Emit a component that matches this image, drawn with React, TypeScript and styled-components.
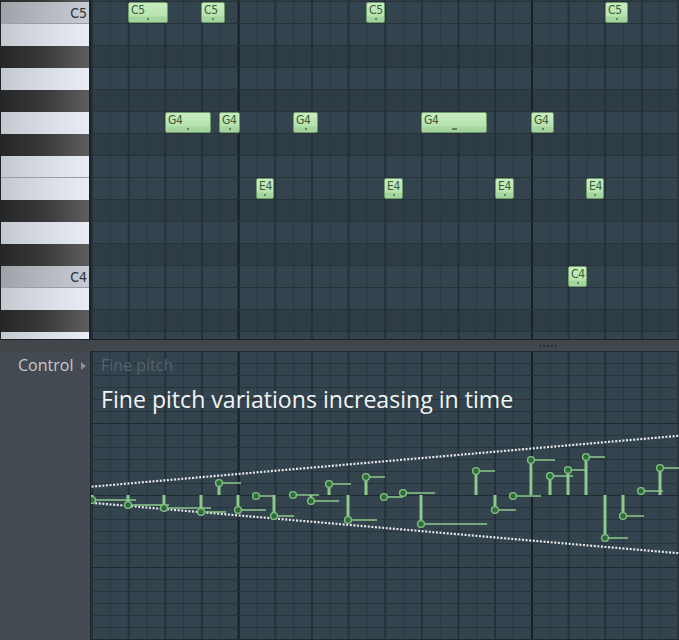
import React from "react";
import styled, { createGlobalStyle, css } from "styled-components";

const GlobalStyle = createGlobalStyle`
  html, body {
    margin: 0;
    padding: 0;
    background: #434a51;
  }
  body {
    font-family: "Open Sans", "Liberation Sans", sans-serif;
    overflow: hidden;
  }
`;

const ROW = 22;
const CENTER = 495;

type KeyKind = "white" | "black" | "c";

interface PianoKey {
  name: string;
  kind: KeyKind;
  edge?: boolean;
  h?: number;
}

const keys: PianoKey[] = [
  { name: "C#5", kind: "black", h: 2 },
  { name: "C5", kind: "c", edge: true },
  { name: "B4", kind: "white" },
  { name: "A#4", kind: "black" },
  { name: "A4", kind: "white" },
  { name: "G#4", kind: "black" },
  { name: "G4", kind: "white" },
  { name: "F#4", kind: "black" },
  { name: "F4", kind: "white", edge: true },
  { name: "E4", kind: "white" },
  { name: "D#4", kind: "black" },
  { name: "D4", kind: "white" },
  { name: "C#4", kind: "black" },
  { name: "C4", kind: "c", edge: true },
  { name: "B3", kind: "white" },
  { name: "A#3", kind: "black" },
  { name: "A3", kind: "white" },
];

// label, row index in keys[], page x start, page x end
const notes: [string, number, number, number][] = [
  ["C5", 1, 128, 168],
  ["C5", 1, 201, 225],
  ["C5", 1, 366, 385],
  ["C5", 1, 605, 628],
  ["G4", 6, 165, 211],
  ["G4", 6, 219, 240],
  ["G4", 6, 293, 318],
  ["G4", 6, 421, 487],
  ["G4", 6, 531, 554],
  ["E4", 9, 256, 274],
  ["E4", 9, 384, 403],
  ["E4", 9, 495, 514],
  ["E4", 9, 586, 604],
  ["C4", 13, 568, 587],
];

// x, value y, end x
const events: [number, number, number][] = [
  [92, 500, 136],
  [128, 505, 169],
  [164, 508, 211],
  [201, 512, 226],
  [219, 483, 241],
  [238, 510, 266],
  [256, 496, 274],
  [274, 516, 294],
  [293, 495, 319],
  [311, 501, 339],
  [329, 484, 351],
  [348, 520, 377],
  [366, 477, 385],
  [384, 497, 403],
  [403, 493, 435],
  [421, 524, 487],
  [476, 471, 495],
  [495, 510, 516],
  [513, 496, 541],
  [531, 460, 555],
  [550, 476, 573],
  [568, 470, 586],
  [586, 457, 605],
  [605, 538, 628],
  [623, 516, 644],
  [641, 491, 663],
  [660, 468, 684],
];

const GRID_LEFT = 91;

const stepLines = `
  linear-gradient(90deg, transparent 147px, #16212a 147px 148.3px, transparent 148.3px),
  linear-gradient(90deg, transparent 0.3px, #24303a 0.3px 1.5px, transparent 1.5px),
  linear-gradient(90deg, transparent 18.6px, #2a3741 18.6px 19.7px, transparent 19.7px)
`;
const stepSizes = `293.333px 100%, 36.667px 100%, 36.667px 100%`;

const verticalLines = css`
  background-image: ${stepLines};
  background-size: ${stepSizes};
`;

const Page = styled.div`
  width: 679px;
  height: 640px;
  display: flex;
  flex-direction: column;
  overflow: hidden;
`;

const Roll = styled.div`
  height: 339px;
  display: flex;
  overflow: hidden;
`;

const Keyboard = styled.div`
  width: 88px;
  border-left: 1px solid #1d2428;
  display: flex;
  flex-direction: column;
  flex-shrink: 0;
`;

const keyBg: Record<KeyKind, string> = {
  white: "linear-gradient(90deg, #c3c7ce 0%, #d6dae2 45%, #e8ecf4 100%)",
  black: "linear-gradient(90deg, #262626 0%, #3a3a3a 50%, #5e5e5e 100%)",
  c: "linear-gradient(90deg, #9da2a9 0%, #b2b6bd 45%, #c7cbd3 100%)",
};

const Key = styled.div<{ $kind: KeyKind; $edge?: boolean; $h: number }>`
  height: ${(p) => p.$h}px;
  flex-shrink: 0;
  box-sizing: border-box;
  background: ${(p) => keyBg[p.$kind]};
  border-bottom: ${(p) => (p.$edge ? "1px solid #9a9ea6" : "none")};
  display: flex;
  align-items: center;
  justify-content: flex-end;
  padding-right: 2px;
  font-family: "DejaVu Sans Condensed", "Liberation Sans Narrow", "DejaVu Sans", sans-serif;
  font-stretch: condensed;
  font-size: 14px;
  color: #2d333a;
`;

const KeySep = styled.div`
  width: 2px;
  flex-shrink: 0;
  background: #1b2328;
`;

const NoteGrid = styled.div`
  flex: 1;
  position: relative;
  display: flex;
  flex-direction: column;
`;

const GridRow = styled.div<{ $black: boolean; $h: number }>`
  height: ${(p) => p.$h}px;
  flex-shrink: 0;
  box-sizing: border-box;
  border-bottom: 1px solid #27323b;
  background-color: ${(p) => (p.$black ? "#2e3c46" : "#34444e")};
  ${verticalLines}
`;

const Note = styled.div`
  position: absolute;
  height: 21px;
  box-sizing: border-box;
  border: 1px solid #6c9c69;
  border-radius: 2px;
  background: linear-gradient(180deg, #c8ecc0 0%, #b6e2ae 70%, #a8d6a0 72%, #a4d29c 100%);
  padding: 1px 0 0 2px;
  font-family: "DejaVu Sans Condensed", "Liberation Sans Narrow", "DejaVu Sans", sans-serif;
  font-stretch: condensed;
  font-size: 12px;
  letter-spacing: -0.4px;
  line-height: 13px;
  color: #3a5a39;
  overflow: hidden;
  white-space: nowrap;
`;

const NoteMark = styled.span`
  position: absolute;
  bottom: 2px;
  height: 2px;
  background: #5f845d;
`;

const Splitter = styled.div`
  height: 12px;
  box-sizing: border-box;
  border-top: 1px solid #1c2226;
  background: #41464b;
  display: flex;
  align-items: center;
  padding-left: 539px;
  gap: 2px;
`;

const GripDot = styled.span`
  width: 2px;
  height: 2px;
  background: #2a2f34;
`;

const ControlArea = styled.div`
  height: 289px;
  display: flex;
`;

const ControlSide = styled.div`
  width: 90px;
  flex-shrink: 0;
  background: #434a51;
  border-right: 1px solid #1d262c;
`;

const ControlLabel = styled.div`
  display: flex;
  align-items: center;
  gap: 8px;
  padding: 4px 0 0 18px;
  font-size: 16px;
  line-height: 21px;
  color: #c3c9cd;
`;

const Arrow = styled.span`
  width: 0;
  height: 0;
  border-left: 5px solid #8a9096;
  border-top: 4.5px solid transparent;
  border-bottom: 4.5px solid transparent;
  margin-top: 1px;
`;

const Lane = styled.div`
  flex: 1;
  position: relative;
  background-color: #34444e;
  background-image: linear-gradient(180deg, #1f2a32 0 1px, transparent 1px),
    linear-gradient(180deg, #28343d 0 1px, transparent 1px),
    ${stepLines};
  background-size: 100% 72px, 100% 12px, ${stepSizes};
  overflow: hidden;
`;

const LaneSvg = styled.svg`
  display: block;
`;

const LaneTitle = styled.div`
  position: absolute;
  left: 10px;
  top: 4px;
  font-size: 16px;
  line-height: 21px;
  color: #56626b;
`;

const Caption = styled.div`
  position: absolute;
  left: 10px;
  top: 35px;
  font-size: 23.1px;
  line-height: 1.2;
  color: #f2f4f5;
  white-space: nowrap;
`;

const GREEN = "#8cca8c";

function PianoRoll() {
  return (
    <Roll>
      <Keyboard>
        {keys.map((k) => (
          <Key key={k.name} $kind={k.kind} $edge={k.edge} $h={k.h ?? ROW}>
            {k.kind === "c" ? k.name : null}
          </Key>
        ))}
      </Keyboard>
      <KeySep />
      <NoteGrid>
        {keys.map((k) => (
          <GridRow key={k.name} $black={k.kind === "black"} $h={k.h ?? ROW} />
        ))}
        {notes.map(([label, row, x0, x1], i) => {
          const w = x1 - x0;
          const mark = w > 60 ? 5 : 2;
          return (
            <Note
              key={i}
              style={{ left: x0 - GRID_LEFT, top: 2 + (row - 1) * ROW, width: w }}
            >
              {label}
              <NoteMark style={{ left: w / 2 - mark / 2 - 1, width: mark }} />
            </Note>
          );
        })}
      </NoteGrid>
    </Roll>
  );
}

function EventLane() {
  return (
    <Lane>
      <LaneSvg width={588} height={289} viewBox="91 351 588 289">
        <line
          x1={88}
          y1={487}
          x2={682}
          y2={435.5}
          stroke="#e6e8ea"
          strokeWidth={2.2}
          strokeDasharray="2 1.6"
        />
        <line
          x1={88}
          y1={502.5}
          x2={682}
          y2={553.5}
          stroke="#e6e8ea"
          strokeWidth={2.2}
          strokeDasharray="2 1.6"
        />
        {events.map(([x, y, end], i) => (
          <g key={i}>
            {Math.abs(y - CENTER) > 2 && (
              <rect
                x={x - 1.5}
                y={Math.min(y, CENTER)}
                width={3}
                height={Math.abs(y - CENTER)}
                fill={GREEN}
              />
            )}
            <line x1={x} y1={y} x2={end} y2={y} stroke={GREEN} strokeWidth={1.5} />
            <circle cx={x} cy={y} r={3.4} fill="#2f6b3b" stroke="#82c182" strokeWidth={1.4} />
          </g>
        ))}
      </LaneSvg>
      <LaneTitle>Fine pitch</LaneTitle>
      <Caption>Fine pitch variations increasing in time</Caption>
    </Lane>
  );
}

export default function App() {
  return (
    <>
      <GlobalStyle />
      <Page>
        <PianoRoll />
        <Splitter>
          {[0, 1, 2, 3, 4].map((i) => (
            <GripDot key={i} />
          ))}
        </Splitter>
        <ControlArea>
          <ControlSide>
            <ControlLabel>
              Control
              <Arrow />
            </ControlLabel>
          </ControlSide>
          <EventLane />
        </ControlArea>
      </Page>
    </>
  );
}
